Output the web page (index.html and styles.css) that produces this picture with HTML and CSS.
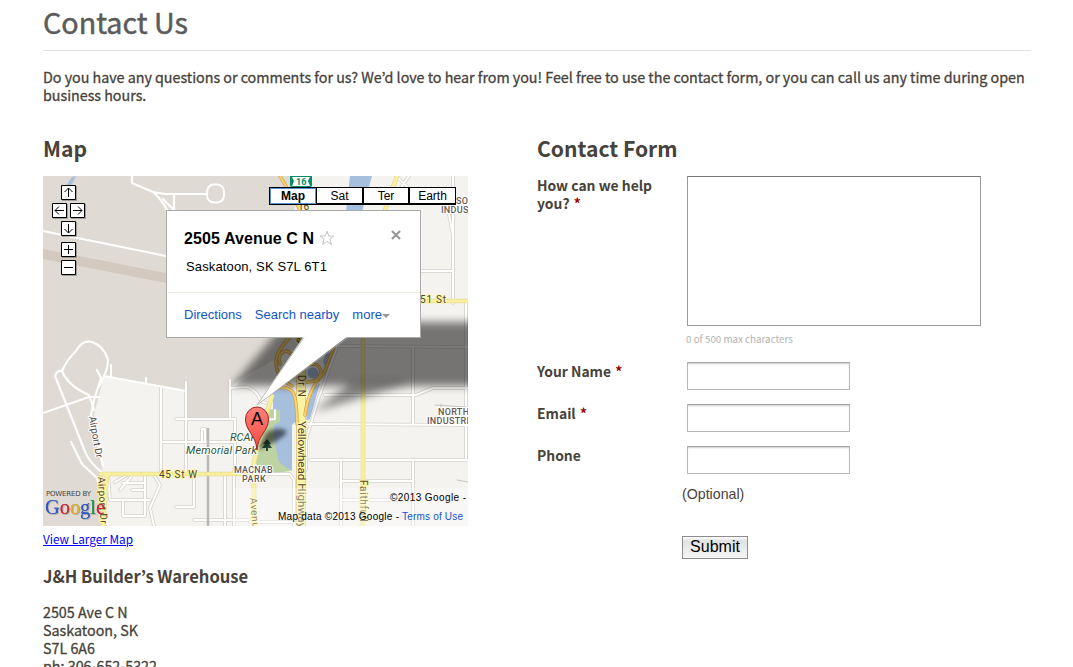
FILE: index.html
```html
<!DOCTYPE html>
<html lang="en">
<head>
<meta charset="utf-8">
<title>Contact Us</title>
<link rel="stylesheet" href="styles.css">
</head>
<body>
<main class="page">
<h1 class="title"><span>Contact Us</span></h1>
<p class="intro">Do you have any questions or comments for us? We’d love to hear from you! Feel free to use the contact form, or you can call us any time during open<br>business hours.</p>
<div class="columns">
<section class="location">
<h2>Map</h2>
<div class="map">
<svg class="tiles" viewBox="43 176 425 350" width="425" height="350">
<defs>
<filter id="soft" x="-20%" y="-40%" width="140%" height="180%"><feGaussianBlur stdDeviation="4"/></filter>
<filter id="soft2" x="-30%" y="-50%" width="160%" height="200%"><feGaussianBlur stdDeviation="2"/></filter>
<linearGradient id="pin" x1="0" y1="0" x2="0" y2="1"><stop offset="0" stop-color="#ff8078"/><stop offset="1" stop-color="#f4483f"/></linearGradient>
</defs>
<rect x="43" y="176" width="425" height="350" fill="#dfdbd4"/>
<path d="M43 249L166 273V283L43 259Z" fill="#d3c9be"/>
<path d="M104 376L186 391V419H230V388L270 350L300 176H468V526H107L103 473L94 415Z" fill="#f4f3f0"/>
<path d="M275 176L310 260L300 345L230 385V340L250 250Z" fill="#dfdbd4"/>
<path d="M66 186L72 177L76 176L72 184L66 190Z" fill="#a5bfdd"/>
<path d="M350 176H372L362 212H346Z" fill="#a5bfdd"/>
<path d="M273 393Q279 385 290 388L297 395V420L292 425V471L278 464L273 440Z" fill="#a5bfdd"/>
<path d="M323 362L328 346L330 358L325 366ZM309 392L320 383L310 419L306 421Z" fill="#a5bfdd"/>
<circle cx="313" cy="373" r="5.500" fill="#a5bfdd"/>
<path d="M269 409L280 410V422L274 425V440L279 462L291 471L275 473L255 464L261 430Z" fill="#bdd4a2"/>
<!-- minor roads: casing, then surface -->
<g fill="none" stroke-linejoin="round" stroke-linecap="round">
<g stroke="#d6d2cb" stroke-width="3.600">
<path d="M161 387V474M186 382V474M230 380V419M176 419H235M162 442H234M235 419V473M202 442V429H205V442"/>
<path d="M108 474L110 500H150M115 482L127 475M123 483H145M132 490H145M120 490L131 477M145 474V516H123V500M154 475L160 485L150 508L154 526M176 507H194V474M225 474V526M194 520H250M234 474V526"/>
<path d="M310 460H468M308 424L468 425M325 395H416L433 388H468M341 460V526M413 460V526M413 348V425M466 303V458M341 481H413M341 500H413M420 271H452M453 176V303M447 204L453 235V303M466 303V335M334 346L468 347M337 347L318 400L306 440V470M230 388L246 387Q256 389 261 401L266 403M256 474H290L294 480V526M396 176L415 194M398 192L409 176M250 522H294"/>
</g>
<g stroke="#fff" stroke-width="2">
<path d="M161 387V474M186 382V474M230 380V419M176 419H235M162 442H234M235 419V473M202 442V429H205V442"/>
<path d="M108 474L110 500H150M115 482L127 475M123 483H145M132 490H145M120 490L131 477M145 474V516H123V500M154 475L160 485L150 508L154 526M176 507H194V474M225 474V526M194 520H250M234 474V526"/>
<path d="M310 460H468M308 424L468 425M325 395H416L433 388H468M341 460V526M413 460V526M413 348V425M466 303V458M341 481H413M341 500H413M420 271H452M453 176V303M447 204L453 235V303M466 303V335M334 346L468 347M337 347L318 400L306 440V470M230 388L246 387Q256 389 261 401L266 403M256 474H290L294 480V526M396 176L415 194M398 192L409 176M250 522H294"/>
</g>
<!-- airport service roads -->
<path stroke="#fff" stroke-width="2.200" d="M132 176V183L153 192Q162 200 167 210M153 192L165 194H206M174 194V210L163 199M94 410L89 395Q68 386 62 371Q66 361 76 351Q83 339 92 342Q103 346 107 357Q111 366 97 390M55 376Q57 370 62 371M55 376L84 449Q88 462 104 474M71 442L82 464L97 478L108 526M97 370L101 378L94 400L91 415L103 466"/>
<path stroke="#fff" stroke-width="2" d="M43 231L166 256M43 413L89 397H100M104 376L186 391M111 376V365M146 383V378M265 420L275 419V410"/>
<rect x="207" y="184.500" width="17" height="18" rx="7" stroke="#fff" stroke-width="2"/>
<path stroke="#b9b7b8" stroke-width="2.500" stroke-linecap="butt" d="M208 428V526"/>
<path stroke="#c6c3c0" stroke-width="1" d="M435 405L466 407M457 480L468 482M441 404V408"/>
</g>
<g fill="none" stroke-linecap="round" stroke-linejoin="round">
<path stroke="#e6dc9c" stroke-width="4.600" d="M101 474H257M254 525V462L263 425L272 396M363 340V526M420 301H468M107 474L103 526M397 176L385 210"/>
<path stroke="#f8f09a" stroke-width="3.200" d="M101 474H257M254 525V462L263 425L272 396M363 340V526M420 301H468M107 474L103 526M397 176L385 210"/>
<path stroke="#dfc983" stroke-width="10" stroke-linecap="butt" d="M301 370V526"/>
<path stroke="#fbf3a4" stroke-width="8" stroke-linecap="butt" d="M301 370V526"/>
<path stroke="#cfa344" stroke-width="3.400" d="M280 176L300 210M290 337Q275 352 276 364Q277 378 292 386M280 364Q277 352 287 351L296 357M305 366Q319 360 321 372Q319 383 304 382M334 347L324 373Q308 389 305 415M270 390Q283 384 292 391Q297 397 297 424"/>
<path stroke="#fdd475" stroke-width="2" d="M280 176L300 210M290 337Q275 352 276 364Q277 378 292 386M280 364Q277 352 287 351L296 357M305 366Q319 360 321 372Q319 383 304 382M334 347L324 373Q308 389 305 415M270 390Q283 384 292 391Q297 397 297 424"/>
</g>
<path d="M267 439L263 444H265L262 448H266V451H268V448H272L269 444H271Z" fill="#28503a"/>
<g class="road">
<text transform="translate(89 417) rotate(80)" textLength="42">Airport Dr</text>
<text class="halo" transform="translate(98 477) rotate(87)" textLength="47">Airport Dr</text>
<text class="halo" x="159" y="478" textLength="38">45 St W</text>
<text class="halo" x="420" y="303" textLength="26">51 St</text>
<text class="halo" transform="translate(298 375) rotate(90)" textLength="22">Dr N</text>
<text class="halo" transform="translate(300 344) rotate(-60)">er</text>
<text class="halo" transform="translate(298 421) rotate(90)" textLength="107" lengthAdjust="spacingAndGlyphs">Yellowhead Highway</text>
<text class="halo" transform="translate(360 480) rotate(90)" textLength="52">Faithfull A</text>
<text class="halo" transform="translate(250 498) rotate(85)" textLength="36">Avenue</text>
<text class="halo" x="298" y="210">16</text>
</g>
<path d="M234 488H468V526H234Z" fill="#fff" fill-opacity=".35"/>
<g class="district"><text x="437" y="204">HUDSON</text><text x="441" y="213">INDUSTRIAL</text><text x="438" y="415">NORTH</text><text x="427" y="424">INDUSTRIAL</text><text x="234" y="473" textLength="39">MACNAB</text><text x="242" y="482" textLength="24">PARK</text></g>
<g class="park"><text x="230" y="441">RCAF</text><text x="186" y="454" textLength="71">Memorial Park</text></g>
<rect x="290" y="174" width="22" height="13" rx="2" fill="#078d65"/>
<path d="M292 177H310L308 181L310 186H292L294 181Z" fill="#fff"/>
<text class="shield" x="296" y="185">16</text>
<path d="M232 386L286 322H485V386Z" fill="#000" fill-opacity=".52" filter="url(#soft)"/>
<path d="M313 412L350 383H410Z" fill="#000" fill-opacity=".45" filter="url(#soft)"/>
<path d="M257 450L267 432Q279 426 287 431Q285 439 257 450Z" fill="#000" fill-opacity=".55" filter="url(#soft2)"/>
<path d="M257 450C256 435 245.500 431 245.500 419A11.500 12 0 0 1 268.500 419C268.500 431 258 435 257 450Z" fill="url(#pin)" stroke="#962b25" stroke-width="1"/>
<text class="pin-letter" x="257" y="425" text-anchor="middle">A</text>
<text class="powered" x="46" y="496" textLength="45">POWERED BY</text>
<text class="logo" x="45" y="514" textLength="60" lengthAdjust="spacingAndGlyphs"><tspan fill="#3159c5">G</tspan><tspan fill="#d7212c">o</tspan><tspan fill="#e8b310">o</tspan><tspan fill="#3159c5">g</tspan><tspan fill="#19993a">l</tspan><tspan fill="#d7212c">e</tspan></text>
<g class="copyright"><text x="390" y="501" textLength="76">©2013 Google -</text><text x="278" y="520" textLength="121">Map data ©2013 Google -</text><text x="402" y="520" textLength="61" fill="#15c">Terms of Use</text></g>
</svg>
<svg class="controls" viewBox="0 0 36 94" width="36" height="94">
<g fill="#555" fill-opacity=".45"><path d="M10 1h15v15H10zM1 19h15v15H1zM19 19h15v15H19zM10 37h15v15H10zM10 58h15v15H10zM10 76h15v15H10z"/></g>
<g fill="#fff" stroke="#000"><path d="M9.500.5h14v14h-14zM.5 18.500h14v14H.5zM18.500 18.500h14v14h-14zM9.500 36.500h14v14h-14zM9.500 57.500h14v14h-14zM9.500 75.500h14v14h-14z"/></g>
<g fill="none" stroke="#000"><path d="M16.500 3v9M12.500 7l4-4 4 4M3 25.500h9M7 21.500l-4 4 4 4M21 25.500h9M26 21.500l4 4-4 4M16.500 39v9M12.500 44l4 4 4-4M12 64.500h9M16.500 60v9M12 82.500h9"/></g>
</svg>
<div class="types"><span class="current">Map</span><span>Sat</span><span>Ter</span><span>Earth</span></div>
<div class="bubble">
<div class="place"><strong>2505 Avenue C N</strong>
<svg class="star" viewBox="0 0 16 16" width="16" height="16"><path d="M8 1.200L9.800 6H15L10.800 9.200 12.400 14.500 8 11.300 3.600 14.500 5.200 9.200 1 6H6.200Z" fill="#fff" stroke="#c4c4c4"/></svg>
<svg class="close" viewBox="0 0 10 10" width="10" height="10"><path d="M1 1L9 9M9 1L1 9" stroke="#999" stroke-width="2.200"/></svg></div>
<div class="city">Saskatoon, SK S7L 6T1</div>
<div class="actions"><span>Directions</span><span>Search nearby</span><span class="more">more</span></div>
</div>
<svg class="tail" viewBox="0 0 94 70" width="94" height="70"><path d="M48 0L1 69L92 0Z" fill="#fff"/><path d="M48 1.500L1 69L92 1.500" fill="none" stroke="#aaa" stroke-width=".8"/></svg>
</div>
<a class="larger" href="#"><span>View Larger Map</span></a>
<h3><span>J&amp;H Builder’s Warehouse</span></h3>
<address>2505 Ave C N<br>Saskatoon, SK<br>S7L 6A6<br>ph: 306-652-5322</address>
</section>
<section class="contact">
<h2>Contact Form</h2>
<form>
<div class="row message"><label for="message">How can we help<br>you? <em>*</em></label><div><textarea id="message"></textarea><p class="count">0 of 500 max characters</p></div></div>
<div class="row"><label for="name">Your Name <em>*</em></label><input id="name"></div>
<div class="row"><label for="email">Email <em>*</em></label><input id="email"></div>
<div class="row"><label for="phone">Phone</label><input id="phone"></div>
<p class="optional">(Optional)</p>
<button type="button">Submit</button>
</form>
</section>
</div>
</main>
</body>
</html>
```
FILE: styles.css
```css
* { box-sizing: border-box; }
body { margin: 0; background: #fff; overflow: hidden; height: 667px; color: #47423a; font: 400 14.3px/18px "Noto Sans CJK KR", "Noto Sans", sans-serif; }
h1, h2, h3, p { margin: 0; }
.page { width: 988px; margin-left: 43px; padding-top: 3px; }
.title { height: 48px; border-bottom: 1px solid #e2e2e2; color: #5b5b5b; font-size: 28.700px; line-height: 38px; font-weight: 400; -webkit-text-stroke: .5px #5b5b5b; }
.intro { padding-top: 17px; height: 84px; white-space: nowrap; letter-spacing: -.018px; }
.intro, address { -webkit-text-stroke: .3px #47423a; }
.columns { display: grid; grid-template-columns: 494px 494px; }
h2 { height: 41px; font-size: 21.100px; line-height: 26px; font-weight: 700; }
.map { position: relative; width: 425px; height: 350px; overflow: hidden; font-family: "Liberation Sans", Arial, sans-serif; color: #000; }
.tiles { display: block; }
.controls { position: absolute; left: 9px; top: 9px; }
.types { position: absolute; left: 226px; top: 11px; width: 187px; height: 18px; display: grid; grid-template-columns: 46px 47px 46px 46px; border: 1px solid #000; border-bottom-width: 2px; background: #fff; font-size: 12px; line-height: 16px; text-align: center; }
.types span { border-right: 1px solid #000; }
.types span + span { border-left: 1px solid #000; }
.types span:last-child { border-right: 0; }
.types .current { font-weight: 700; border: 1px solid #5a91d6; line-height: 14px; }
.bubble { position: absolute; left: 123px; top: 34px; width: 255px; height: 128px; border: 1px solid #aaa; padding: 19px 0 0 17px; background: #fff; }
.tail { position: absolute; left: 213px; top: 160px; }
.place { display: flex; align-items: center; height: 18px; font-size: 16px; }
.place strong { width: 131px; letter-spacing: .1px; white-space: nowrap; }
.star { margin-left: 4px; margin-top: -2px; }
.close { margin-left: 56px; margin-top: -8px; }
.city { padding: 11px 0 0 2px; height: 44px; font-size: 13px; line-height: 16px; letter-spacing: .13px; }
.actions { display: flex; gap: 13px; border-top: 1px solid #eeeade; margin-left: -16px; padding: 13px 0 0 16px; color: #15c; font-size: 13px; line-height: 17px; white-space: nowrap; }
.more::after { content: ""; display: inline-block; border: 4px solid transparent; border-top-color: #999; vertical-align: -3px; }
.road text { font: 10px Roboto, sans-serif; fill: #4f4238; stroke: #fff; stroke-width: 2px; paint-order: stroke; }
.road .halo { stroke: #fff8a5; }
.district text { font: 500 9px Roboto, sans-serif; letter-spacing: .3px; fill: #635953; stroke: #fff; stroke-width: 2px; paint-order: stroke; }
.park text { font: italic 11px Roboto, sans-serif; fill: #285438; stroke: #fff; stroke-width: 2px; paint-order: stroke; }
.shield { font: 700 9px Roboto, sans-serif; fill: #078d65; }
.pin-letter { font: 18px "Liberation Sans", Arial, sans-serif; }
.powered { font: 7px "DejaVu Sans", sans-serif; fill: #444; }
.logo { font: 21px "Liberation Serif", serif; filter: drop-shadow(.5px 0 0 rgba(60, 60, 120, .5)) drop-shadow(1px 1px 0 rgba(90, 90, 90, .3)); }
.copyright text { font: 10px "Liberation Sans", Arial, sans-serif; }
.larger { display: block; height: 39px; padding-top: 4px; color: #00f; font-size: 11.800px; line-height: 18px; font-weight: 400; }
h3 { height: 38px; font-size: 16.600px; line-height: 22px; font-weight: 700; }
address { font-style: normal; }
form { display: flex; flex-direction: column; }
.row { display: grid; grid-template-columns: 150px auto; height: 42px; justify-content: start; }
.message { height: 186px; }
label { font-weight: 700; font-size: 13.900px; }
em { color: #900; font-style: normal; margin-left: 1px; }
textarea, input { display: block; margin: 0; padding: 2px; border: 1px solid #999; border-radius: 0; background: #fff; outline: 0; }
textarea { width: 294px; height: 150px; border-top-color: #777; resize: none; }
input { width: 163px; height: 28px; border-color: #a5a5a5 #b8b8b8 #b8b8b8; box-shadow: inset 0 2px 2px -1px #ccc; }
.count { margin: 4px 0 0 -1px; color: #b2b2b2; font-size: 9.800px; font-weight: 400; }
.optional { margin: -2px 0 0 145px; height: 50px; font: 14.2px/16px "Liberation Sans", Arial, sans-serif; }
button { width: 66px; height: 23px; margin-left: 145px; padding: 0 0 2px; border: 1px solid #8b8b8b; background: linear-gradient(#fff, #e2e2e2 18%, #f5f5f5); color: #000; font: 16px/19px "Liberation Sans", Arial, sans-serif; }
```
